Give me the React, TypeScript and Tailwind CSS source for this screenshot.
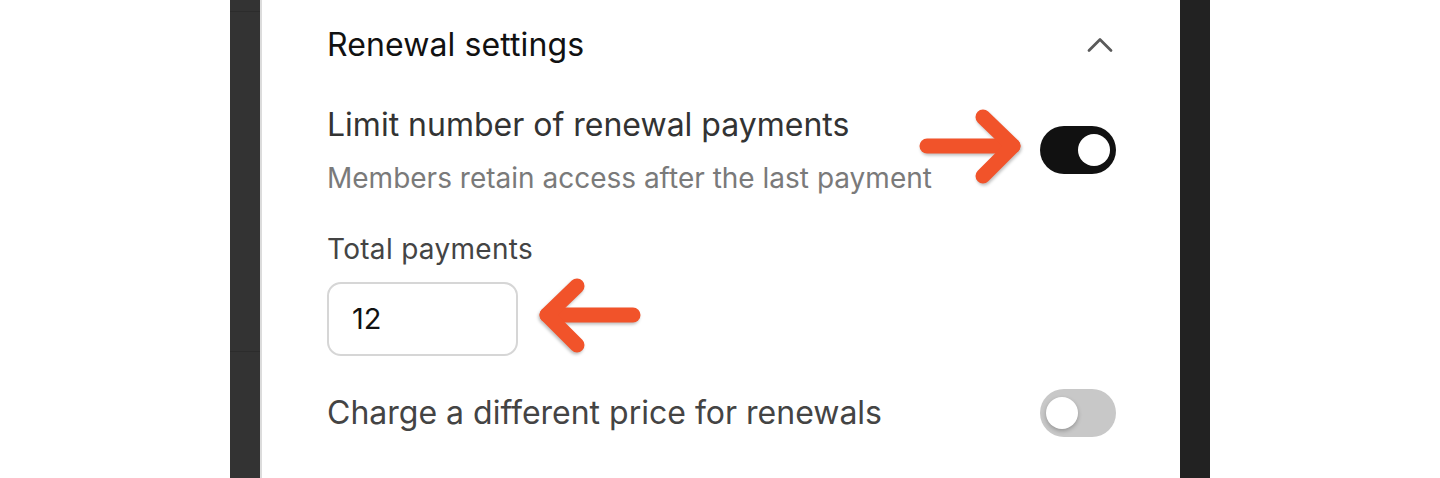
import { ChevronUp } from 'lucide-react';

function Toggle({ on }: { on: boolean }) {
  return (
    <div
      className={`relative h-[48px] w-[76px] shrink-0 rounded-full ${
        on ? 'bg-[#111111]' : 'bg-[#c8c8c8]'
      }`}
    >
      <div
        className={`absolute top-[8px] h-[32px] w-[32px] rounded-full bg-white ${
          on ? 'right-[6px]' : 'left-[6px] shadow-[0_2px_4px_rgba(0,0,0,0.25)]'
        }`}
      />
    </div>
  );
}

function Arrow({ dir, className }: { dir: 'left' | 'right'; className: string }) {
  return (
    <svg
      className={`pointer-events-none absolute ${className}`}
      width="110"
      height="80"
      viewBox="0 0 110 80"
      fill="none"
    >
      <g
        stroke="#f1532a"
        strokeWidth="15"
        strokeLinecap="round"
        strokeLinejoin="round"
        transform={dir === 'left' ? 'translate(110 0) scale(-1 1)' : undefined}
        style={{ filter: 'drop-shadow(1px 2px 1.5px rgba(0,0,0,0.25))' }}
      >
        <path d="M10 38 H96" />
        <path d="M66 9 L96 38 L66 68" />
      </g>
    </svg>
  );
}

export default function App() {
  return (
    <div
      className="flex h-[478px] w-full justify-center overflow-hidden bg-white"
      style={{ fontFamily: 'Inter, "Noto Sans", sans-serif' }}
    >
      <div className="flex w-[980px]">
        <div className="relative w-[30px] bg-[#333333]">
          <div className="absolute left-0 right-0 top-[11px] h-px bg-[#2c2c2c]" />
          <div className="absolute left-0 right-0 top-[351px] h-px bg-[#2c2c2c]" />
        </div>
        <div className="w-[2px] bg-[#dcdcdc]" />
        <div className="relative flex-1 bg-white pl-[65px] pr-[64px]">
          <div className="flex h-[90px] items-center justify-between">
            <h2 className="text-[32px] font-normal tracking-[0.1px] text-[#111111]">
              Renewal settings
            </h2>
            <ChevronUp className="-mr-[6px] h-[44px] w-[44px] text-[#5a5a5a]" strokeWidth={1.5} />
          </div>

          <div className="mt-[15px] flex items-center justify-between">
            <div>
              <div className="text-[32px] leading-[40px] text-[#333333]">
                Limit number of renewal payments
              </div>
              <div className="mt-[16px] text-[28px] leading-[34px] text-[#7a7a7a]">
                Members retain access after the last payment
              </div>
            </div>
            <Toggle on />
          </div>

          <div className="mt-[37px] text-[28px] leading-[34px] tracking-[0.3px] text-[#444444]">
            Total payments
          </div>
          <div className="mt-[16px] flex h-[74px] w-[191px] items-center rounded-[14px] border-2 border-[#d6d6d6] pl-[23px] text-[29px] text-[#111111]">
            12
          </div>

          <div className="mt-[33px] flex items-center justify-between">
            <div className="text-[32px] leading-[48px] text-[#444444]">
              Charge a different price for renewals
            </div>
            <Toggle on={false} />
          </div>

          <Arrow dir="right" className="left-[655px] top-[108px]" />
          <Arrow dir="left" className="left-[271px] top-[277px]" />
        </div>
        <div className="w-[30px] bg-[#222222]" />
      </div>
    </div>
  );
}
